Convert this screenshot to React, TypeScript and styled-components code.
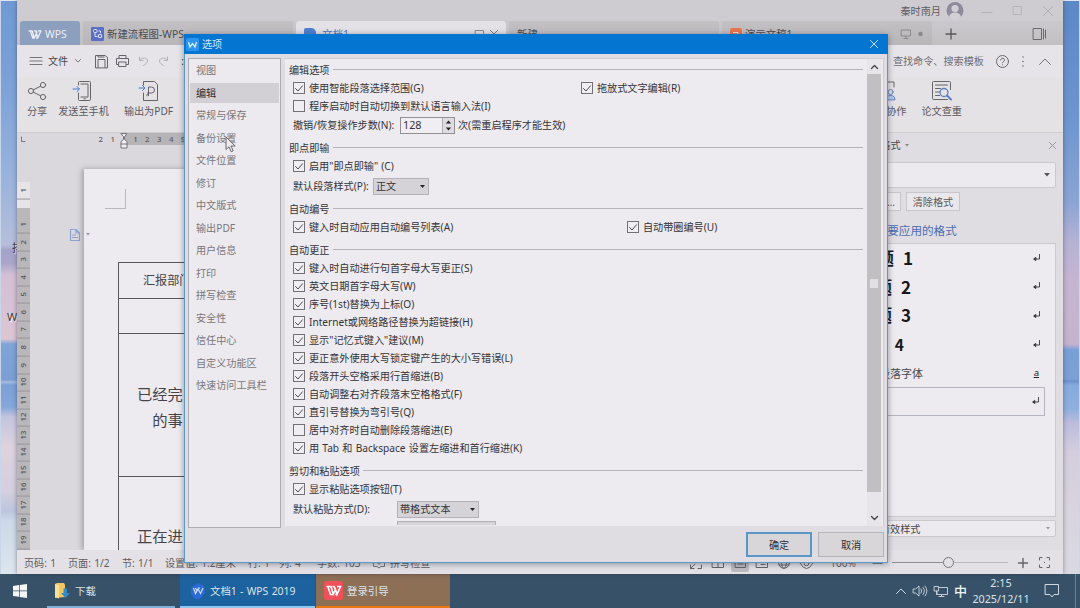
import React from "react";
import styled, { createGlobalStyle } from "styled-components";

const GlobalStyle = createGlobalStyle`
  *, *::before, *::after { box-sizing: border-box; }
  html, body { margin: 0; padding: 0; }
  body {
    width: 1080px;
    height: 608px;
    overflow: hidden;
    font-family: "Noto Sans", "Noto Sans CJK SC", sans-serif;
    font-size: 10.15px;
    line-height: 14px;
    word-spacing: 0.6px;
    color: #3f3d42;
    white-space: nowrap;
  }
  svg { display: block; flex: none; overflow: visible; }
`;

/* ---------- desktop ---------- */

const Desktop = styled.div`
  position: relative;
  width: 1080px;
  height: 608px;
  display: flex;
  flex-direction: column;
  overflow: hidden;
`;

const Stage = styled.div`
  display: flex;
  height: 574px;
`;

const Wallpaper = styled.div<{ $side: "left" | "right" }>`
  width: 17px;
  flex: none;
  overflow: hidden;
  border-top: 1px solid #dfe6f0;
  border-${(p) => p.$side}: 1px solid #c9d5ea;
  background: ${(p) =>
    p.$side === "left"
      ? `linear-gradient(#7099d3 0, #7ba1d7 80px, #9ab4dc 180px, #b7bedb 244px, #a3a3ca 249px, #a9a6c9 262px,
         #d3c0d6 274px, #dcc6d3 338px, #7fa4d6 343px, #7b9fd3 379px, #a8bce0 381px, #7c9fd6 384px, #86a7da 406px,
         #c3c5de 416px, #dcd3dd 445px, #d4cfde 490px, #bcc5de 510px, #ccd8e8 520px, #dce6ee 574px)`
      : `linear-gradient(#5c88c5 0, #6e96d0 120px, #8aa4d4 200px, #b5b2d4 240px, #c6b5d1 280px, #c5b3ce 343px,
         #78a0d6 349px, #7ca0d6 378px, #6b90cc 380px, #86aade 384px, #8fb0de 408px, #bcbcdc 422px, #d3cddd 450px,
         #d8d3de 500px, #dad9e2 574px)`};
`;

const DesktopLabel = styled.div<{ $top: number; $pl: number }>`
  padding-left: ${(p) => p.$pl}px;
  margin-top: ${(p) => p.$top}px;
  height: 14px;
  color: #3a3a42;
  font-size: 11px;
  text-shadow: 1px 1px 1px #fff;
`;

/* ---------- editor window ---------- */

const Window = styled.div`
  width: 1046px;
  flex: none;
  display: flex;
  flex-direction: column;
  background: #e5e2e6;
  box-shadow: 0 0 4px rgba(40, 40, 60, 0.5);
  z-index: 1;
`;

const TitleRow = styled.div`
  height: 21px;
  flex: none;
  display: flex;
  align-items: center;
  justify-content: flex-end;
  padding-right: 10px;
  background: #cfccd1;
  color: #5f5c62;
`;

const CaptionIcons = styled.div`
  display: flex;
  align-items: center;
  gap: 21px;
  margin-left: 18px;
`;

const TabRow = styled.div`
  height: 24px;
  flex: none;
  display: flex;
  padding-left: 3px;
  background: linear-gradient(#cbc8cd, #c3c0c4);
`;

const Tab = styled.div<{ $w: number; $tone?: "home" | "active" }>`
  width: ${(p) => p.$w}px;
  flex: none;
  display: flex;
  align-items: center;
  gap: 3px;
  padding: 2px 8px 0;
  margin-right: 3px;
  border-radius: 3px 3px 0 0;
  font-size: 10.4px;
  color: ${(p) => (p.$tone === "home" ? "#eceef5" : p.$tone === "active" ? "#5278c0" : "#4c4a4e")};
  background: ${(p) =>
    p.$tone === "home" ? "#8d9fbf" : p.$tone === "active" ? "#e3e1e5" : "linear-gradient(#c3c0c4, #b9b6ba)"};
`;

const Spacer = styled.div`
  flex: 1;
`;

const TabTools = styled.div`
  flex: 1;
  display: flex;
  align-items: center;
  justify-content: space-between;
  padding: 1px 17px 0 11px;
`;

const MenuRow = styled.div`
  height: 32px;
  flex: none;
  display: flex;
  align-items: center;
  padding: 0 12px 0 13px;
  background: #e6e4e8;
`;

const MenuText = styled.span<{ $ml?: number; $mr?: number }>`
  margin-left: ${(p) => p.$ml ?? 0}px;
  margin-right: ${(p) => p.$mr ?? 0}px;
  color: #48464b;
`;

const QuickTools = styled.div<{ $gap: number; $ml: number }>`
  display: flex;
  gap: ${(p) => p.$gap}px;
  margin-left: ${(p) => p.$ml}px;
  align-items: center;
`;

const MenuRight = styled.div`
  display: flex;
  align-items: center;
  gap: 12px;
  margin-left: auto;
  color: #6e6b70;
`;

const Ribbon = styled.div`
  height: 56px;
  flex: none;
  display: flex;
  justify-content: space-between;
  padding: 3px 101px 0 10px;
  border-bottom: 1px solid #cfcdd1;
  background: #e5e2e6;
`;

const RibbonGroup = styled.div<{ $gap: number }>`
  display: flex;
  gap: ${(p) => p.$gap}px;
`;

const RibbonItem = styled.div<{ $ml?: number }>`
  display: flex;
  flex-direction: column;
  align-items: center;
  gap: 2px;
  margin-left: ${(p) => p.$ml ?? 0}px;
  color: #5b585e;
`;

const Workspace = styled.div`
  height: 417px;
  flex: none;
  display: flex;
  overflow: hidden;
`;

const Canvas = styled.div`
  width: 843px;
  display: flex;
  flex-direction: column;
  background: #dad8dc;
`;

const HRuler = styled.div`
  height: 12px;
  flex: none;
  display: flex;
  font-size: 7.8px;
  font-weight: 500;
  line-height: 12px;
  color: #5f5c62;
`;

const HRulerOut = styled.div`
  width: 107px;
  display: flex;
  align-items: center;
  justify-content: flex-end;
  padding: 0 9px 0 4px;
  gap: 7.5px;
`;

const IndentMarker = styled.div`
  width: 6px;
  margin: 0 -3px 0 -3px;
  z-index: 1;
`;

const HRulerIn = styled.div`
  flex: 1;
  display: flex;
  padding-left: 5.5px;
  background: #b6b4b7;
`;

const HRulerNumber = styled.span`
  width: 11.9px;
  text-align: center;
`;

const CanvasBody = styled.div`
  flex: 1;
  display: flex;
  min-height: 0;
`;

const VRuler = styled.div`
  width: 13px;
  flex: none;
  padding-top: 37px;
  display: flex;
  flex-direction: column;
`;

const VRulerMargin = styled.div`
  height: 26px;
  flex: none;
  background: #e6e4e7;
`;

const VRulerBody = styled.div`
  flex: 1;
  min-height: 0;
  overflow: hidden;
  padding-top: 8.2px;
  background: #b9b7ba;
`;

const VNumber = styled.div`
  height: 17.55px;
  display: flex;
  align-items: center;
  justify-content: center;
  border-top: 1px solid #98969a;
  font-size: 7.8px;
  font-weight: 500;
  line-height: 13px;
  color: #57555a;
  writing-mode: vertical-rl;
  transform: rotate(180deg);
`;

const PageMarker = styled.div`
  width: 54px;
  flex: none;
  padding: 84px 0 0 40px;
`;

const Page = styled.div`
  flex: 1;
  margin-top: 24px;
  background: #edebf0;
  box-shadow: -2px 0 5px rgba(60, 60, 70, 0.35);
  padding: 20px 0 0 21px;
`;

const PageCorner = styled.div`
  width: 21px;
  height: 20px;
  border-right: 1px solid #bab8bc;
  border-bottom: 1px solid #bab8bc;
`;

const LineArrow = styled.div`
  margin: 24px 0 0 -19px;
  height: 5px;
`;

const DocTable = styled.div`
  margin: 24px 0 0 13px;
  border-left: 1px solid #59575c;
  width: 600px;
`;

const DocCell = styled.div<{ $h: number; $pl: number; $size: number; $pt?: number }>`
  height: ${(p) => p.$h}px;
  padding: ${(p) => p.$pt ?? 0}px 0 0 ${(p) => p.$pl}px;
  border-top: 1px solid #59575c;
  font-size: ${(p) => p.$size}px;
  line-height: 26px;
  color: #454348;
`;

const DocLine = styled.div<{ $indent?: number }>`
  padding-left: ${(p) => p.$indent ?? 0}px;
`;

/* ---------- styles side panel ---------- */

const SidePanel = styled.div`
  flex: 1;
  display: flex;
  flex-direction: column;
  padding: 0 7px 0 6px;
  background: #dfdde1;
`;

const PanelTitle = styled.div`
  height: 24px;
  flex: none;
  display: flex;
  align-items: center;
  justify-content: space-between;
  color: #48464b;
`;

const PanelTitleText = styled.span`
  display: flex;
  align-items: center;
  gap: 4px;
  margin-left: -16px;
`;

const PanelCombo = styled.div<{ $h: number; $mt: number }>`
  height: ${(p) => p.$h}px;
  margin-top: ${(p) => p.$mt}px;
  flex: none;
  display: flex;
  align-items: center;
  justify-content: space-between;
  padding: 0 5px 0 2px;
  border: 1px solid #cbc9ce;
  border-radius: 2px;
  background: #eceaee;
  color: #57555a;
`;

const PanelButtons = styled.div`
  display: flex;
  gap: 5px;
  margin: 4px 0 0 -6px;
`;

const PanelButton = styled.div<{ $w: number; $end?: boolean }>`
  width: ${(p) => p.$w}px;
  height: 19px;
  display: flex;
  align-items: center;
  justify-content: ${(p) => (p.$end ? "flex-end" : "center")};
  padding-right: ${(p) => (p.$end ? 5 : 0)}px;
  border: 1px solid #c8c6cb;
  background: #e9e7eb;
  color: #5a585d;
`;

const PanelHeading = styled.div`
  margin: 12px 0 4px -2px;
  height: 16px;
  line-height: 16px;
  font-size: 11.6px;
  color: #4b6db1;
`;

const StyleList = styled.div`
  height: 274px;
  flex: none;
  padding: 0 10px 0 0;
  border: 1px solid #cbc9ce;
  background: #edebf0;
`;

const StyleRow = styled.div<{ $pl: number; $big?: number; $selected?: boolean }>`
  height: 28.6px;
  display: flex;
  align-items: center;
  justify-content: space-between;
  padding: 0 5px 0 ${(p) => p.$pl}px;
  border: ${(p) => (p.$selected ? "1px solid #b4b5bf" : "0 solid")};
  font-family: "Noto Sans CJK SC", sans-serif;
  font-size: ${(p) => p.$big ?? 11}px;
  font-weight: ${(p) => (p.$big ? 700 : 400)};
  color: ${(p) => (p.$big ? "#18171b" : "#48464b")};
`;

const CharMark = styled.span`
  font-family: "Noto Sans", sans-serif;
  font-size: 9.5px;
  line-height: 10px;
  color: #222;
  padding: 0 1px;
  text-decoration: underline;
`;

/* ---------- status bar ---------- */

const StatusBar = styled.div`
  flex: 1;
  display: flex;
  align-items: center;
  padding: 1px 13px 0 7px;
  background: #e3e1e5;
  color: #5f5c62;
`;

const StatusItem = styled.span<{ $w: number }>`
  width: ${(p) => p.$w}px;
  flex: none;
  display: flex;
  align-items: center;
  gap: 5px;
`;

const ViewButtons = styled.div`
  display: flex;
  align-items: center;
  gap: 4px;
  margin-left: auto;
`;

const ViewButton = styled.div<{ $on?: boolean }>`
  width: 18px;
  height: 18px;
  display: flex;
  align-items: center;
  justify-content: center;
  background: ${(p) => (p.$on ? "#bcbabf" : "transparent")};
  border-radius: 2px;
`;

const ZoomArea = styled.div`
  display: flex;
  align-items: center;
  margin-left: 15px;
`;

const ZoomTrack = styled.div`
  width: 116px;
  height: 11px;
  margin: 0 9px 0 10px;
  display: flex;
  align-items: center;
`;

const TrackPart = styled.div<{ $w: number; $dark?: boolean }>`
  width: ${(p) => p.$w}px;
  height: 1px;
  background: ${(p) => (p.$dark ? "#8f8d92" : "#bab8bd")};
`;

const TrackKnob = styled.div`
  width: 11px;
  height: 11px;
  border: 1px solid #77757a;
  border-radius: 50%;
`;

/* ---------- options dialog ---------- */

const Dialog = styled.div`
  position: absolute;
  z-index: 2;
  left: 184px;
  top: 34px;
  width: 704px;
  height: 529px;
  display: flex;
  flex-direction: column;
  border: 1px solid #5a9aca;
  border-top: 0;
  background: #dfdde1;
  box-shadow: 0 1px 6px rgba(30, 40, 60, 0.45);
`;

const DialogTitle = styled.div`
  height: 20px;
  flex: none;
  display: flex;
  align-items: center;
  gap: 3px;
  margin: 0 -1px;
  padding: 0 10px 0 2px;
  background: #0575d2;
  color: #d5e8f8;
`;

const DialogBody = styled.div`
  display: flex;
  height: 472px;
  flex: none;
  padding: 4px 3px 0;
  gap: 4px;
`;

const Categories = styled.div`
  width: 93px;
  height: 470px;
  padding: 1.2px 1px;
  border: 1px solid #aeacb0;
  background: #eceaee;
`;

const Category = styled.div<{ $selected?: boolean }>`
  height: 20.5px;
  margin-bottom: 2px;
  padding-left: 6px;
  display: flex;
  align-items: center;
  color: ${(p) => (p.$selected ? "#2d2b30" : "#79767b")};
  background: ${(p) => (p.$selected ? "#d2d0d4" : "transparent")};
`;

const Options = styled.div`
  flex: 1;
  height: 468px;
  display: flex;
  border-top: 1px solid #d0ced2;
  background: #edebef;
  border-right: 1px solid #cfcdd1;
  overflow: hidden;
`;

const OptionsList = styled.div`
  width: 578px;
  height: 466px;
  margin-right: 4px;
  padding: 2px 0 0 4px;
  overflow: hidden;
`;

const Section = styled.section<{ $mt: number }>`
  margin-top: ${(p) => p.$mt}px;
`;

const SectionTitle = styled.div`
  height: 18px;
  display: flex;
  align-items: center;
  gap: 3px;
  color: #353338;
  &::after {
    content: "";
    flex: 1;
    height: 1px;
    margin-bottom: 1px;
    background: #b5b3b8;
  }
`;

const OptionRow = styled.div<{ $h?: number }>`
  height: ${(p) => p.$h ?? 18}px;
  padding-left: 4px;
  display: flex;
  align-items: center;
  color: #353338;
`;

const CheckLabel = styled.span<{ $w?: number }>`
  width: ${(p) => (p.$w ? `${p.$w}px` : "auto")};
  flex: none;
  display: flex;
  align-items: center;
  gap: 4px;
`;

const Box = styled.span`
  width: 12px;
  height: 12px;
  flex: none;
  display: flex;
  align-items: center;
  justify-content: center;
  border: 1px solid #737177;
  background: #f0eef2;
`;

const FieldLabel = styled.span<{ $w: number }>`
  width: ${(p) => p.$w}px;
  flex: none;
`;

const Spinner = styled.span`
  width: 55px;
  height: 17px;
  margin-right: 3px;
  display: flex;
  align-items: center;
  padding-left: 2px;
  border: 1px solid #918f94;
  background: #f0eef2;
  font-size: 10.8px;
`;

const SpinnerArrows = styled.span`
  width: 12px;
  height: 15px;
  margin-left: auto;
  display: flex;
  align-items: center;
  justify-content: center;
  border-left: 1px solid #b0aeb3;
  background: #dedce0;
`;

const Select = styled.span<{ $w: number }>`
  width: ${(p) => p.$w}px;
  height: 17px;
  display: flex;
  align-items: center;
  justify-content: space-between;
  padding: 0 3px 0 2px;
  border: 1px solid #b3b1b6;
  background: #d5d3d8;
`;

const Scrollbar = styled.div`
  width: 14px;
  height: 467px;
  display: flex;
  flex-direction: column;
  background: #e7e5e9;
`;

const ScrollButton = styled.div`
  height: 15px;
  display: flex;
  align-items: center;
  justify-content: center;
`;

const Thumb = styled.div`
  height: 418px;
  margin-bottom: 18px;
  display: flex;
  align-items: center;
  justify-content: center;
  background: #c1bfc2;
  &::after {
    content: "";
    width: 8px;
    height: 9px;
    background: #e1dfe3;
  }
`;

const DialogFooter = styled.div`
  display: flex;
  justify-content: flex-end;
  gap: 6px;
  padding: 6px 3px 0;
`;

const DialogButton = styled.div<{ $primary?: boolean }>`
  width: 66px;
  height: 25px;
  display: flex;
  align-items: center;
  justify-content: center;
  border: ${(p) => (p.$primary ? "2px solid #5a97c7" : "1px solid #b5b3b8")};
  background: #d9d6da;
  color: #2f2d32;
`;

const Cursor = styled.div`
  position: absolute;
  z-index: 3;
  left: 225px;
  top: 136px;
`;

/* ---------- taskbar ---------- */

const Taskbar = styled.div`
  height: 34px;
  display: flex;
  background: #375268;
  color: #dde4ea;
`;

const StartButton = styled.div`
  width: 47px;
  padding: 10px 0 0 13px;
`;

const Task = styled.div<{ $w: number; $bg?: string; $line: string; $mr?: number; $pl?: number }>`
  width: ${(p) => p.$w}px;
  margin-right: ${(p) => p.$mr ?? 0}px;
  display: flex;
  align-items: center;
  gap: 4px;
  padding: 1px 0 0 ${(p) => p.$pl ?? 8}px;
  border-bottom: 2px solid ${(p) => p.$line};
  background: ${(p) => p.$bg ?? "transparent"};
  font-size: 10.4px;
`;

const Tray = styled.div`
  margin-left: auto;
  display: flex;
  align-items: center;
  gap: 7px;
  padding-right: 4px;
`;

const InputMode = styled.span`
  font-size: 13px;
  font-weight: 500;
  color: #f0f3f6;
  margin-left: -1px;
`;

const Clock = styled.div`
  width: 60px;
  margin-left: -3px;
  text-align: center;
  line-height: 16px;
  font-size: 10.75px;
`;

const DesktopEdge = styled.div`
  width: 1px;
  height: 34px;
  margin-left: 9px;
  background: #6d8193;
`;

/* ---------- drawings ---------- */

type GlyphProps = {
  w: number;
  h: number;
  box?: string;
  c?: string;
  s?: number;
  children: React.ReactNode;
};

const Glyph = ({ w, h, box, c = "#66636a", s = 1, children }: GlyphProps) => (
  <svg
    width={w}
    height={h}
    viewBox={box ?? `0 0 ${w} ${h}`}
    fill="none"
    stroke={c}
    strokeWidth={s}
    strokeLinecap="round"
    strokeLinejoin="round"
  >
    {children}
  </svg>
);

const Down = ({ w = 5, c = "#444248" }: { w?: number; c?: string }) => (
  <svg width={w} height={w * 0.6} viewBox="0 0 10 6">
    <path d="M0 0h10L5 6z" fill={c} />
  </svg>
);

const Cross = ({ size, c }: { size: number; c: string }) => (
  <Glyph w={size} h={size} box="0 0 10 10" c={c} s={10 / size}>
    <path d="M.5.5l9 9M9.5.5l-9 9" />
  </Glyph>
);

const WpsMark = ({ w, h, c = "#eef1f7", s = 1.5 }: { w: number; h: number; c?: string; s?: number }) => (
  <Glyph w={w} h={h} box="0 0 14 10" c={c} s={s}>
    <path d="M.5 1h3.500l2 8L9 3 8 1h-1.500M2 1.500L4.500 9h1.500M8 1.500L10 9l3.500-8h-3M8.500 9H10" />
  </Glyph>
);

const Return = () => (
  <Glyph w={7} h={7} c="#36343a" s={0.9}>
    <path d="M6.500-.5v4.500H1.500" />
    <path d="M2.500 2.600L.6 4l1.900 1.400z" fill="#222126" />
  </Glyph>
);

const Check = ({ on }: { on: boolean }) => (
  <Box>
    {on && (
      <Glyph w={8} h={7} c="#4c4a50" s={1}>
        <path d="M.5 3.500L3 6 7.500.8" />
      </Glyph>
    )}
  </Box>
);

const Option = ({ text, on = true, w }: { text: string; on?: boolean; w?: number }) => (
  <CheckLabel $w={w}>
    <Check on={on} />
    {text}
  </CheckLabel>
);

const categories = [
  "视图", "编辑", "常规与保存", "备份设置", "文件位置", "修订", "中文版式", "输出PDF",
  "用户信息", "打印", "拼写检查", "安全性", "信任中心", "自定义功能区", "快速访问工具栏",
];

const corrections: [string, boolean][] = [
  ["键入时自动进行句首字母大写更正(S)", true],
  ["英文日期首字母大写(W)", true],
  ["序号(1st)替换为上标(O)", true],
  ["Internet或网络路径替换为超链接(H)", true],
  ['显示"记忆式键入"建议(M)', true],
  ["更正意外使用大写锁定键产生的大小写错误(L)", true],
  ["段落开头空格采用行首缩进(B)", true],
  ["自动调整右对齐段落末空格格式(F)", true],
  ["直引号替换为弯引号(Q)", true],
  ["居中对齐时自动删除段落缩进(E)", false],
  ["用 Tab 和 Backspace 设置左缩进和首行缩进(K)", true],
];

const OptionsDialog = () => (
  <Dialog>
    <DialogTitle>
      <svg width="13" height="13" viewBox="0 0 13 13">
        <rect width="13" height="13" rx="2" fill="#2c94ee" />
        <path d="M2.500 4l1.500 5 2.500-3.500L9 9l1.500-5" fill="none" stroke="#d9ecfb" strokeWidth="1.300" />
      </svg>
      选项
      <Spacer />
      <Cross size={8} c="#c8e0f6" />
    </DialogTitle>
    <DialogBody>
      <Categories>
        {categories.map((name) => (
          <Category key={name} $selected={name === "编辑"}>{name}</Category>
        ))}
      </Categories>
      <Options>
        <OptionsList>
          <Section $mt={0}>
            <SectionTitle>编辑选项</SectionTitle>
            <OptionRow>
              <Option text="使用智能段落选择范围(G)" w={288} />
              <Option text="拖放式文字编辑(R)" />
            </OptionRow>
            <OptionRow>
              <Option text="程序启动时自动切换到默认语言输入法(I)" on={false} />
            </OptionRow>
            <OptionRow $h={20}>
              <FieldLabel $w={107}>撤销/恢复操作步数(N):</FieldLabel>
              <Spinner>
                128
                <SpinnerArrows>
                  <svg width="7" height="11" viewBox="0 0 7 11">
                    <path d="M.8 3.500L3.500.5l2.700 3zM.8 7.500l2.700 3 2.700-3z" fill="#242328" />
                  </svg>
                </SpinnerArrows>
              </Spinner>
              次(需重启程序才能生效)
            </OptionRow>
          </Section>
          <Section $mt={4}>
            <SectionTitle>即点即输</SectionTitle>
            <OptionRow><Option text={'启用"即点即输" (C)'} /></OptionRow>
            <OptionRow $h={22}>
              <FieldLabel $w={80}>默认段落样式(P):</FieldLabel>
              <Select $w={56}>正文<Down c="#242328" /></Select>
            </OptionRow>
          </Section>
          <Section $mt={3}>
            <SectionTitle>自动编号</SectionTitle>
            <OptionRow>
              <Option text="键入时自动应用自动编号列表(A)" w={334} />
              <Option text="自动带圈编号(U)" />
            </OptionRow>
          </Section>
          <Section $mt={5}>
            <SectionTitle>自动更正</SectionTitle>
            {corrections.map(([text, on]) => (
              <OptionRow key={text}><Option text={text} on={on} /></OptionRow>
            ))}
          </Section>
          <Section $mt={5}>
            <SectionTitle>剪切和粘贴选项</SectionTitle>
            <OptionRow><Option text="显示粘贴选项按钮(T)" /></OptionRow>
            <OptionRow $h={22}>
              <FieldLabel $w={104}>默认粘贴方式(D):</FieldLabel>
              <Select $w={82}>带格式文本<Down c="#242328" /></Select>
            </OptionRow>
            <OptionRow>
              <FieldLabel $w={104} />
              <Select $w={99} />
            </OptionRow>
          </Section>
        </OptionsList>
        <Scrollbar>
          <ScrollButton>
            <Glyph w={7} h={4} c="#47454a" s={1.4}><path d="M.5 3.500l3-3 3 3" /></Glyph>
          </ScrollButton>
          <Thumb />
          <ScrollButton>
            <Glyph w={7} h={4} c="#47454a" s={1.4}><path d="M.5.5l3 3 3-3" /></Glyph>
          </ScrollButton>
        </Scrollbar>
      </Options>
    </DialogBody>
    <DialogFooter>
      <DialogButton $primary>确定</DialogButton>
      <DialogButton>取消</DialogButton>
    </DialogFooter>
  </Dialog>
);

const Header = () => (
  <>
    <TitleRow>
      秦时南月
      <MenuText $ml={5} />
      <svg width="18" height="18" viewBox="0 0 18 18">
        <circle cx="9" cy="8.500" r="8.500" fill="#8e8c9c" />
        <circle cx="9" cy="6.500" r="3.600" fill="#d2cfd6" />
        <path d="M3 15c1-3.500 3.500-4.500 6-4.500s5 1 6 4.500a8.500 8.500 0 0 1-12 0z" fill="#d2cfd6" />
      </svg>
      <CaptionIcons>
        <Glyph w={10} h={9} c="#b4b1b6"><path d="M0 6.500h10" /></Glyph>
        <Glyph w={9} h={9} c="#b8b5ba"><rect x=".5" y=".5" width="8" height="8" /></Glyph>
        <Cross size={10} c="#b0adb2" />
      </CaptionIcons>
    </TitleRow>
    <TabRow>
      <Tab $w={60} $tone="home">
        <WpsMark w={14} h={9} />
        WPS
      </Tab>
      <Tab $w={210}>
        <svg width="13" height="14" viewBox="0 0 13 14">
          <rect width="13" height="14" rx="1" fill="#5b6fc6" />
          <g fill="none" stroke="#dfe3f5">
            <rect x="2.500" y="2.500" width="3.500" height="3" rx="1" />
            <rect x="7.500" y="7.500" width="3" height="3" rx=".5" />
            <path d="M4 6v3.500h2.500M7.500 4h2v2" />
          </g>
        </svg>
        新建流程图-WPS
      </Tab>
      <Tab $w={210} $tone="active">
        <svg width="12" height="13" viewBox="0 0 12 13">
          <path d="M0 2q0-2 2-2h6q4 1 4 5v8H0z" fill="#4f7fd2" />
          <path d="M3 6l1.500 4L6 7l1.500 3L9 6" fill="none" stroke="#e3e9f6" />
        </svg>
        <span>&nbsp;文档1</span>
        <Spacer />
        <Glyph w={8} h={8} c="#8a888d"><rect x=".5" y=".5" width="8" height="6" /></Glyph>
        <MenuText $ml={1} />
        <Cross size={8} c="#7a787d" />
      </Tab>
      <Tab $w={210}>新建</Tab>
      <Tab $w={210}>
        <svg width="12" height="13" viewBox="0 0 12 13">
          <rect width="12" height="13" rx="2" fill="#e8764e" />
          <path d="M3 4.500h5v3H3" fill="none" stroke="#f6e2da" />
        </svg>
        演示文稿1
        <Spacer />
        <Glyph w={10} h={10} c="#8a888d"><path d="M.5 1h9v6h-9zM5 7v2M3 9.500h4" /></Glyph>
        <Glyph w={10} h={6}><circle cx="6.500" cy="3" r="2.200" fill="#8a888d" stroke="none" /></Glyph>
      </Tab>
      <TabTools>
        <Glyph w={10} h={10} c="#57555a" s={1.3}><path d="M5 0v10M0 5h10" /></Glyph>
        <Glyph w={13} h={12} c="#6a686d"><path d="M.5.5h8v11h-8zM10.500 1v10M12.500 2v8" /></Glyph>
      </TabTools>
    </TabRow>
    <MenuRow>
      <Glyph w={12} h={8} c="#77757a"><path d="M0 .5h12M0 4h12M0 7.500h12" /></Glyph>
      <MenuText $ml={6} $mr={7}>文件</MenuText>
      <Glyph w={6} h={4} c="#77757a"><path d="M.5.5L3 3.200 5.500.5" /></Glyph>
      <QuickTools $gap={8} $ml={14}>
        <Glyph w={13} h={13}><path d="M.5 12.500V.5h9.500l2.500 2v10zM3 12.500v-8h7v8M3 .5V2h6" /></Glyph>
        <Glyph w={13} h={12}><path d="M3 3V.5h7V3M2.500 9.500h-2V3.500h12v6h-2M3 7h7v4.500H3z" /></Glyph>
      </QuickTools>
      <QuickTools $gap={11} $ml={10}>
        <Glyph w={9} h={10} c="#b4b2b7"><path d="M.5 1v3.500H4M.8 4C3 1 8.500 1.500 8.500 5c0 2-2 3-4 4.500" /></Glyph>
        <Glyph w={9} h={10} c="#b4b2b7"><path d="M8.500 1v3.500H5M8.200 4C6 1 .5 1.500.5 5c0 2 2 3 4 4.500" /></Glyph>
        <MenuText $ml={2}>:</MenuText>
      </QuickTools>
      <MenuRight>
        查找命令、搜索模板
        <Glyph w={13} h={13} c="#6a686d">
          <circle cx="6.500" cy="6.500" r="6" />
          <path d="M4.700 5c0-2.500 3.800-2.300 3.800 0 0 1.400-2 1.500-2 2.800M6.500 9.800v.1" />
        </Glyph>
        <Glyph w={6} h={11}>
          <path d="M2 1v.1M2 5.500v.1M2 10v.1" strokeWidth="1.500" />
        </Glyph>
        <Glyph w={12} h={7} c="#77757a"><path d="M.5 6.500l5.500-5.500 5.500 5.500" /></Glyph>
      </MenuRight>
    </MenuRow>
    <Ribbon>
      <RibbonGroup $gap={11}>
        <RibbonItem>
          <Glyph w={18} h={22}>
            <circle cx="3" cy="11" r="2.600" />
            <circle cx="15" cy="5" r="2.600" />
            <circle cx="15" cy="17" r="2.600" />
            <path d="M5.400 9.800l7.200-3.600M5.400 12.200l7.200 3.600" />
          </Glyph>
          分享
        </RibbonItem>
        <RibbonItem>
          <Glyph w={22} h={22}>
            <path d="M5.500 5V2.500q0-1 1-1h10q1 0 1 1v17q0 1-1 1h-10q-1 0-1-1V13M8 4h7v13H8M11 18.800h1.500" />
            <path d="M0 9h6M4 6.500L6.500 9 4 11.500" stroke="#4a7ad0" />
          </Glyph>
          发送至手机
        </RibbonItem>
        <RibbonItem $ml={4}>
          <Glyph w={19} h={22}>
            <path d="M4.500 5V1.500h11l3 3v16h-14V13M9.500 15.500V7h3q3 0 3 3t-3 3h-4M8 16q-1-1 .5-2" />
            <path d="M0 8h5M3.500 5.500L6 8 3.500 10.500" stroke="#4a7ad0" />
          </Glyph>
          输出为PDF
        </RibbonItem>
      </RibbonGroup>
      <RibbonGroup $gap={15}>
        <RibbonItem>
          <Glyph w={20} h={22} c="#5c80c4">
            <path d="M2 2h6v5" stroke="#66636a" />
            <circle cx="4.500" cy="12" r="2.500" />
            <path d="M0 19.500q0-4 4.500-4t4.500 4z" fill="#b5c8ea" />
          </Glyph>
          协作
        </RibbonItem>
        <RibbonItem>
          <Glyph w={20} h={22}>
            <path d="M18.500 9.500V2.500q0-1-1-1h-16q-1 0-1 1v16q0 1 1 1h14M3.500 5h12M3.500 8.500h5M3.500 12h4M3.500 15.500h4" />
            <circle cx="12" cy="12.500" r="4" stroke="#5c80c4" strokeWidth="1.300" />
            <path d="M15 15.500l4 4" stroke="#5c80c4" strokeWidth="2" />
          </Glyph>
          论文查重
        </RibbonItem>
      </RibbonGroup>
    </Ribbon>
  </>
);

const Document = () => (
  <Canvas>
    <HRuler>
      <HRulerOut>
        <Glyph w={5} h={5} c="#77757a"><path d="M.5 0v4.500H4" /></Glyph>
        <Spacer />
        <span>2</span>
        <span>1</span>
      </HRulerOut>
      <IndentMarker>
        <Glyph w={6} h={16} c="#77757a">
          <path d="M.2.5h5.600L3.500 4v2.500l2.500 2v6.500H0V8.500l2.500-2V4zM0 11h6" fill="#f1eff3" />
        </Glyph>
      </IndentMarker>
      <HRulerIn>
        {Array.from({ length: 5 }, (_, i) => <HRulerNumber key={i}>{i + 1}</HRulerNumber>)}
      </HRulerIn>
    </HRuler>
    <CanvasBody>
      <VRuler>
        <VRulerMargin><VNumber>1</VNumber></VRulerMargin>
        <VRulerBody>
          {Array.from({ length: 19 }, (_, i) => <VNumber key={i}>{i + 1}</VNumber>)}
        </VRulerBody>
      </VRuler>
      <PageMarker>
        <Glyph w={10} h={12} c="#8fa3d2" s={1.2}>
          <path d="M.5.5H6l3.500 3.500v7.500h-9zM6 .5V4h3.500M2.500 6h3M2.500 8.500h5" />
        </Glyph>
      </PageMarker>
      <Page>
        <PageCorner />
        <LineArrow><Down w={4} c="#98969b" /></LineArrow>
        <DocTable>
          <DocCell $h={36} $pl={24} $size={12.1} $pt={5}>汇报部门</DocCell>
          <DocCell $h={35} $pl={24} $size={12} />
          <DocCell $h={143} $pl={18} $size={15.3} $pt={47}>
            <DocLine>已经完</DocLine>
            <DocLine $indent={15.3}>的事</DocLine>
          </DocCell>
          <DocCell $h={90} $pl={18} $size={15.3} $pt={46}>正在进</DocCell>
        </DocTable>
      </Page>
    </CanvasBody>
  </Canvas>
);

const StylesPanel = () => (
  <SidePanel>
    <PanelTitle>
      <PanelTitleText>样式和格式<Down w={4} c="#8a888d" /></PanelTitleText>
      <Cross size={7} c="#9a989d" />
    </PanelTitle>
    <PanelCombo $h={26} $mt={5}><span /><Down w={6} c="#57555a" /></PanelCombo>
    <PanelButtons>
      <PanelButton $w={41} $end>新…</PanelButton>
      <PanelButton $w={54}>清除格式</PanelButton>
    </PanelButtons>
    <PanelHeading>选择要应用的格式</PanelHeading>
    <StyleList>
      <StyleRow $pl={10} $big={17}>题&nbsp; 1<Return /></StyleRow>
      <StyleRow $pl={8} $big={17}>题&nbsp; 2<Return /></StyleRow>
      <StyleRow $pl={8} $big={17}>题&nbsp; 3<Return /></StyleRow>
      <StyleRow $pl={4} $big={15.5}>题&nbsp; 4<Return /></StyleRow>
      <StyleRow $pl={12}>段落字体<CharMark>a</CharMark></StyleRow>
      <StyleRow $pl={0} $selected><span /><Return /></StyleRow>
    </StyleList>
    <PanelCombo $h={17} $mt={3}><MenuText $ml={11}>有效样式</MenuText><Down w={4} c="#9a989d" /></PanelCombo>
  </SidePanel>
);

const Status = () => (
  <StatusBar>
    <StatusItem $w={44}>页码: 1</StatusItem>
    <StatusItem $w={54}>页面: 1/2</StatusItem>
    <StatusItem $w={43}>节: 1/1</StatusItem>
    <StatusItem $w={83}>设置值: 1.2厘米</StatusItem>
    <StatusItem $w={31}>行: 1</StatusItem>
    <StatusItem $w={38}>列: 4</StatusItem>
    <StatusItem $w={56}>字数: 103</StatusItem>
    <StatusItem $w={80}>
      <Glyph w={12} h={10} c="#77757a"><path d="M4 .5H.5v8H4l2 1.500 2-1.500h3.500V5M4 4l2 2.500L11 1" /></Glyph>
      拼写检查
    </StatusItem>
    <ViewButtons>
      <ViewButton><Glyph w={12} h={12}><path d="M8 .5h3.500V4M11.500.5L7 5M.5 8v3.500H4M.5 11.500L5 7M8 11.500h3.500V8" /></Glyph></ViewButton>
      <ViewButton><Glyph w={12} h={12}><path d="M.5 1.500h5.500v9H.5zM6 1.500h5.500v9H6" /></Glyph></ViewButton>
      <ViewButton $on><Glyph w={11} h={12}><path d="M.5.5h10v10H.5zM3 4h5M3 7h5" /></Glyph></ViewButton>
      <ViewButton><Glyph w={12} h={12}><path d="M.5.5h11v10H.5zM3 4h4M5 7.500h4" /></Glyph></ViewButton>
      <ViewButton>
        <Glyph w={12} h={12}><circle cx="6" cy="6" r="5.300" /><ellipse cx="6" cy="6" rx="2.300" ry="5.300" /><path d="M1 4h10M1 8h10" /></Glyph>
      </ViewButton>
      <ViewButton>
        <Glyph w={13} h={12}><path d="M.5 6.500Q3 1.500 6.500 1.500t6 5q-2.500 5-6 5t-6-5z" /><circle cx="6.500" cy="6.500" r="2.300" /></Glyph>
      </ViewButton>
    </ViewButtons>
    <ZoomArea>
      100%
      <MenuText $ml={4} $mr={9}><Down w={4} c="#9a989d" /></MenuText>
      <Glyph w={9} h={2} s={1.3}><path d="M0 1h9" /></Glyph>
      <ZoomTrack>
        <TrackPart $w={51} $dark />
        <TrackKnob />
        <TrackPart $w={54} />
      </ZoomTrack>
      <MenuText $ml={1} />
      <Glyph w={10} h={10} s={1.4}><path d="M5 .5v9M.5 5h9" /></Glyph>
      <MenuText $ml={11} />
      <Glyph w={11} h={11}><path d="M.5 3V.5H3M8 .5h2.500V3M10.500 8v2.500H8M3 10.500H.5V8M5.500 5.300v.3" /></Glyph>
    </ZoomArea>
  </StatusBar>
);

const BottomBar = () => (
  <Taskbar>
    <StartButton>
      <svg width="14" height="14" viewBox="0 0 14 14">
        <path d="M0 2l6-.9v5.500H0zM6.700 1L14 0v6.600H6.700zM0 7.300h6v5.500L0 12zM6.700 7.300H14V14l-7.300-1z" fill="#f3f5f7" />
      </svg>
    </StartButton>
    <Task $w={128} $line="#7eb0d8" $mr={5}>
      <svg width="16" height="17" viewBox="0 0 16 17">
        <path d="M0 2l2-1h7l1 2v12l-10 1z" fill="#efc864" />
        <path d="M0 2l4 1.500v13L0 15z" fill="#f8e098" />
        <path d="M8.500 6.500h3.500v4.500h3L10.500 16 6 11h2.500z" fill="#3489cb" />
      </svg>
      下载
    </Task>
    <Task $w={135} $bg="#1c629f" $line="#8fc8f2" $mr={1} $pl={10}>
      <svg width="16" height="16" viewBox="0 0 16 16">
        <path d="M8 0l6 3 1 7-5 6H5l-4-5L1.500 4z" fill="#2c6ad8" />
        <path d="M3.500 5l2 5.500L8 6l2.500 4.500L13 5M5.500 5l1.500 3M8 5h2" fill="none" stroke="#cfe0f8" strokeWidth="1.200" />
      </svg>
      文档1 - WPS 2019
    </Task>
    <Task $w={134} $bg="#8d6f56" $line="#e8780f">
      <svg width="19" height="19" viewBox="0 0 19 19">
        <rect width="19" height="19" rx="2.500" fill="#f0505a" />
        <path d="M2.500 5.500h4.500l2.200 7.500 2.300-4.500-1.500-3H8.500M4 6l2.500 7.500H9M11 7l2 6.500L16.500 5.500h-3.500M11 13.500h2" fill="none" stroke="#fff" strokeWidth="1.600" />
      </svg>
      登录引导
    </Task>
    <Tray>
      <Glyph w={10} h={6} c="#cfd8df"><path d="M.5 5.500L5 1l4.500 4.500" /></Glyph>
      <Glyph w={14} h={12} c="#cfd8df" s={0.9}>
        <path d="M.5 4h2L6 1v10L2.500 8h-2zM8 4q1.500 2 0 4M10 2.500q3 3.500 0 7M12 1q4 5 0 10" />
      </Glyph>
      <Glyph w={14} h={11} c="#cfd8df" s={0.9}><path d="M5 1.500h8.500v7H3V6M.5.5h4V5h-4zM2.500 5v3.500M5 10.500h5M7.500 8.500v2" /></Glyph>
      <InputMode>中</InputMode>
      <Clock>
        <div>2:15</div>
        <div>2025/12/11</div>
      </Clock>
      <MenuText />
      <Glyph w={14} h={14} c="#cfd8df"><path d="M.5.5h13v10H9l-2 2.500-2-2.500H.5z" /></Glyph>
      <DesktopEdge />
    </Tray>
  </Taskbar>
);

export default function App() {
  return (
    <Desktop>
      <GlobalStyle />
      <Stage>
        <Wallpaper $side="left">
          <DesktopLabel $top={240} $pl={11}>排</DesktopLabel>
          <DesktopLabel $top={55} $pl={6}>W</DesktopLabel>
        </Wallpaper>
        <Window>
          <Header />
          <Workspace>
            <Document />
            <StylesPanel />
          </Workspace>
          <Status />
        </Window>
        <Wallpaper $side="right" />
      </Stage>
      <BottomBar />
      <OptionsDialog />
      <Cursor>
        <svg width="12" height="17" viewBox="0 0 12 17">
          <path d="M1 1v12.500l3-2.700 2.200 5 2-1-2.200-4.800h4.200z" fill="#eceaee" stroke="#69676c" />
        </svg>
      </Cursor>
    </Desktop>
  );
}
